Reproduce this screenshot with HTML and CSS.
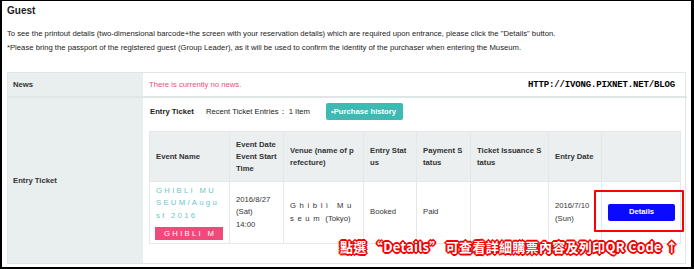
FILE: index.html
```html
<!DOCTYPE html>
<html>
<head>
<meta charset="utf-8">
<link rel="stylesheet" href="styles.css">
</head>
<body>
<div class="frame">
  <div class="title">Guest</div>
  <div class="intro">
    <p>To see the printout details (two-dimensional barcode+the screen with your reservation details) which are required upon entrance, please click the "Details" button.</p>
    <p>*Please bring the passport of the registered guest (Group Leader), as it will be used to confirm the identity of the purchaser when entering the Museum.</p>
  </div>
  <div class="panel">
    <div class="label news-label">News</div>
    <div class="news-body">There is currently no news.</div>
    <div class="label entry-label">Entry Ticket</div>
    <div class="entry-body">
      <div class="subhead">
        <span class="sub-title">Entry Ticket</span>
        <span class="sub-count">Recent Ticket Entries： 1 Item</span>
        <span class="btn-history">•Purchase history</span>
      </div>
      <table class="tickets">
        <colgroup>
          <col style="width:80px"><col style="width:54px"><col style="width:80px"><col style="width:53px"><col style="width:54px"><col style="width:78px"><col style="width:53px"><col style="width:79px">
        </colgroup>
        <thead>
          <tr>
            <th>Event Name</th>
            <th>Event Date<br>Event Start<br>Time</th>
            <th>Venue (name of p<br>refecture)</th>
            <th>Entry Stat<br>us</th>
            <th>Payment S<br>tatus</th>
            <th>Ticket Issuance S<br>tatus</th>
            <th>Entry Date</th>
            <th></th>
          </tr>
        </thead>
        <tbody>
          <tr>
            <td>
              <div class="event-name">GHIBLI MU<br>SEUM/Augu<br>st 2016</div>
              <div class="badge">GHIBLI M</div>
            </td>
            <td>2016/8/27<br>(Sat)<br>14:00</td>
            <td><span class="venue">Ghibli Mu<br>seum</span> (Tokyo)</td>
            <td>Booked</td>
            <td class="paid">Paid</td>
            <td></td>
            <td>2016/7/10<br>(Sun)</td>
            <td><span class="btn-details">Details</span></td>
          </tr>
        </tbody>
      </table>
    </div>
  </div>
  <div class="watermark">HTTP://IVONG.PIXNET.NET/BLOG</div>
  <div class="highlight"></div>
  <div class="note">點選 “Details” 可查看詳細購票內容及列印QR Code ↑</div>
</div>
</body>
</html>
```
FILE: styles.css
```css
html, body { margin: 0; padding: 0; background: #fff; }
.frame {
  position: relative;
  width: 694px;
  height: 269px;
  box-sizing: border-box;
  border: 2px solid #000;
  border-top-width: 1px;
  border-right-width: 3px;
  background: #fff;
  font-family: "Liberation Sans", Arial, sans-serif;
  color: #222;
  overflow: hidden;
}
.title {
  padding: 4px 0 0 5px;
  font-size: 10px;
  font-weight: bold;
  line-height: 12px;
  color: #222;
}
.intro {
  margin: 10px 0 0 5px;
  font-size: 7.7px;
  line-height: 14px;
  color: #222;
}
.intro p { margin: 0; }
.panel {
  margin: 17px 5px 0 5px;
  border: 1px solid #e0e6e6;
  display: grid;
  grid-template-columns: 135px 1fr;
  font-size: 7.7px;
}
.label {
  background: #e9eeee;
  font-weight: bold;
  color: #333;
  padding-left: 5px;
  display: flex;
  align-items: center;
}
.news-label, .news-body {
  height: 23px;
  border-bottom: 2px solid #e0e6e6;
}
.news-body {
  display: flex;
  align-items: center;
  padding-left: 6px;
  color: #e8507a;
}
.entry-body {
  padding: 5px 6px 19px 6px;
}
.subhead {
  display: flex;
  align-items: center;
  height: 17px;
  margin-bottom: 11px;
}
.sub-title { font-weight: bold; margin-left: 1px; margin-right: 12px; }
.sub-count { margin-right: 16px; }
.btn-history {
  display: flex;
  align-items: center;
  height: 17px;
  padding: 0 7px 0 5px;
  background: #3dbab3;
  color: #fff;
  font-weight: bold;
  border-radius: 2px;
}
.tickets {
  border-collapse: collapse;
  table-layout: fixed;
  width: 531px;
}
.tickets th, .tickets td {
  border: 1px solid #e3e8e8;
  text-align: left;
  vertical-align: middle;
  padding: 0 2px 0 6px;
  line-height: 12.5px;
  overflow: hidden;
  white-space: nowrap;
}
.tickets th {
  background: #ebefef;
  height: 49px;
  font-weight: bold;
  color: #333;
  line-height: 12px;
}
.tickets td {
  height: 61px;
  background: #fff;
  color: #333;
}
.event-name {
  color: #6cc6c6;
  letter-spacing: 2.3px;
}
.badge {
  margin-top: 5px;
  margin-left: -1px;
  width: 68px;
  height: 13px;
  line-height: 13px;
  box-sizing: border-box;
  padding-left: 9px;
  background: #ee4b7b;
  color: #fff;
  letter-spacing: 2.3px;
}
.venue { letter-spacing: 3.6px; }
.paid { color: #ec5d86; }
.btn-details {
  display: flex;
  align-items: center;
  justify-content: center;
  width: 67px;
  height: 17px;
  background: #0a0aff;
  color: #fff;
  font-weight: bold;
  border-radius: 2px;
}
.watermark {
  position: absolute;
  left: 526px;
  top: 79px;
  font-family: "Liberation Mono", monospace;
  font-weight: bold;
  font-size: 9px;
  line-height: 10px;
  letter-spacing: -0.15px;
  color: #000;
  text-shadow: 1px 0 #fff, -1px 0 #fff, 0 1px #fff, 0 -1px #fff;
}
.highlight {
  position: absolute;
  left: 592px;
  top: 189px;
  width: 90px;
  height: 42px;
  border: 2px solid #f00;
  box-sizing: border-box;
  border-radius: 1px;
}
.note {
  position: absolute;
  left: 338px;
  top: 237px;
  font-family: "Noto Sans CJK TC", "Noto Sans CJK SC", sans-serif;
  font-weight: bold;
  font-size: 13px;
  line-height: 17px;
  letter-spacing: 0.3px;
  white-space: nowrap;
  color: #fff;
  text-shadow:
    1px 0 #e00, -1px 0 #e00, 0 1px #e00, 0 -1px #e00,
    1px 1px #e00, -1px -1px #e00, 1px -1px #e00, -1px 1px #e00,
    2px 0 #f00, -2px 0 #f00, 0 2px #f00, 0 -2px #f00;
}
```
